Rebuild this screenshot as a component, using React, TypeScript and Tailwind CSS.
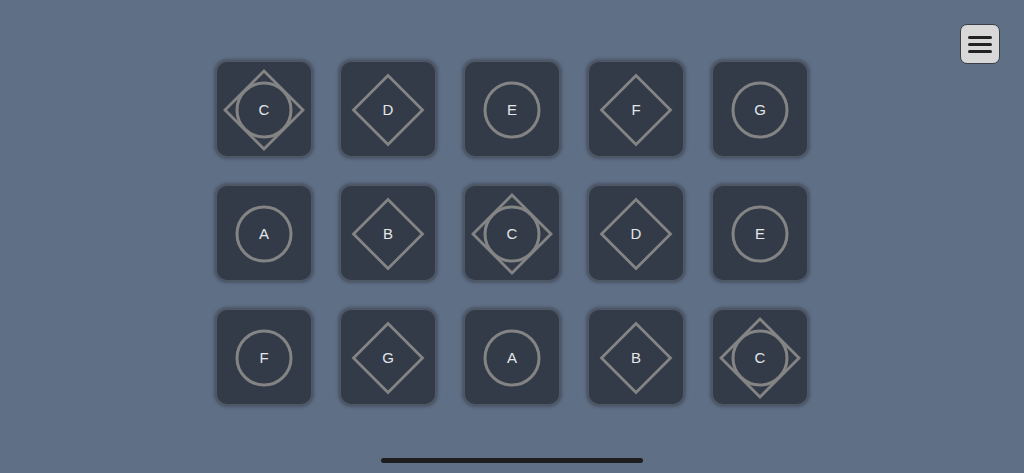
import React from "react";

type Kind = "circle" | "diamond" | "both";
const rows: [string, Kind][][] = [
  [["C", "both"], ["D", "diamond"], ["E", "circle"], ["F", "diamond"], ["G", "circle"]],
  [["A", "circle"], ["B", "diamond"], ["C", "both"], ["D", "diamond"], ["E", "circle"]],
  [["F", "circle"], ["G", "diamond"], ["A", "circle"], ["B", "diamond"], ["C", "both"]],
];

function Tile({ label, kind }: { label: string; kind: Kind }) {
  const dr = kind === "both" ? 39 : 34.5;
  const cx = 49;
  const cy = 50;
  return (
    <div className="relative w-[98px] h-[98px] rounded-[12px] bg-[#323b47] border-2 border-[#4d5766] shadow-[0_0_3px_1px_rgba(72,82,98,0.9)] flex items-center justify-center">
      <svg className="absolute -left-[2px] -top-[2px]" width="98" height="98" viewBox="0 0 98 98">
        {(kind === "diamond" || kind === "both") && (
          <polygon
            points={`${cx},${cy - dr} ${cx + dr},${cy} ${cx},${cy + dr} ${cx - dr},${cy}`}
            fill="none"
            stroke="#848484"
            strokeWidth="2.8"
          />
        )}
        {(kind === "circle" || kind === "both") && (
          <circle cx={cx} cy={cy} r="27" fill="none" stroke="#848484" strokeWidth="3" />
        )}
      </svg>
      <span className="relative text-[15px] leading-none text-[#e4e6ea] mt-[1px]" style={{ fontFamily: "'Liberation Sans', Arial, sans-serif" }}>
        {label}
      </span>
    </div>
  );
}

export default function App() {
  return (
    <div className="relative w-[1024px] h-[473px] bg-[#5f6f86] overflow-hidden" style={{ fontFamily: "'Liberation Sans', Arial, sans-serif" }}>
      <div className="flex justify-center pt-[60px]">
        <div className="flex flex-col gap-[26px]">
          {rows.map((r, i) => (
            <div key={i} className="flex gap-[26px]">
              {r.map(([l, k], j) => (
                <Tile key={j} label={l} kind={k} />
              ))}
            </div>
          ))}
        </div>
      </div>
      <button className="absolute left-[960px] top-[24px] w-[40px] h-[40px] rounded-[7px] bg-[#d8d8d8] border border-[#3a3f47] flex flex-col items-center justify-center gap-[4px]">
        <span className="block w-[24px] h-[3px] rounded-full bg-[#222]" />
        <span className="block w-[24px] h-[3px] rounded-full bg-[#222]" />
        <span className="block w-[24px] h-[3px] rounded-full bg-[#222]" />
      </button>
      <div className="absolute left-[381px] top-[458px] w-[262px] h-[5px] rounded-full bg-[#1c1d1c]" />
    </div>
  );
}
